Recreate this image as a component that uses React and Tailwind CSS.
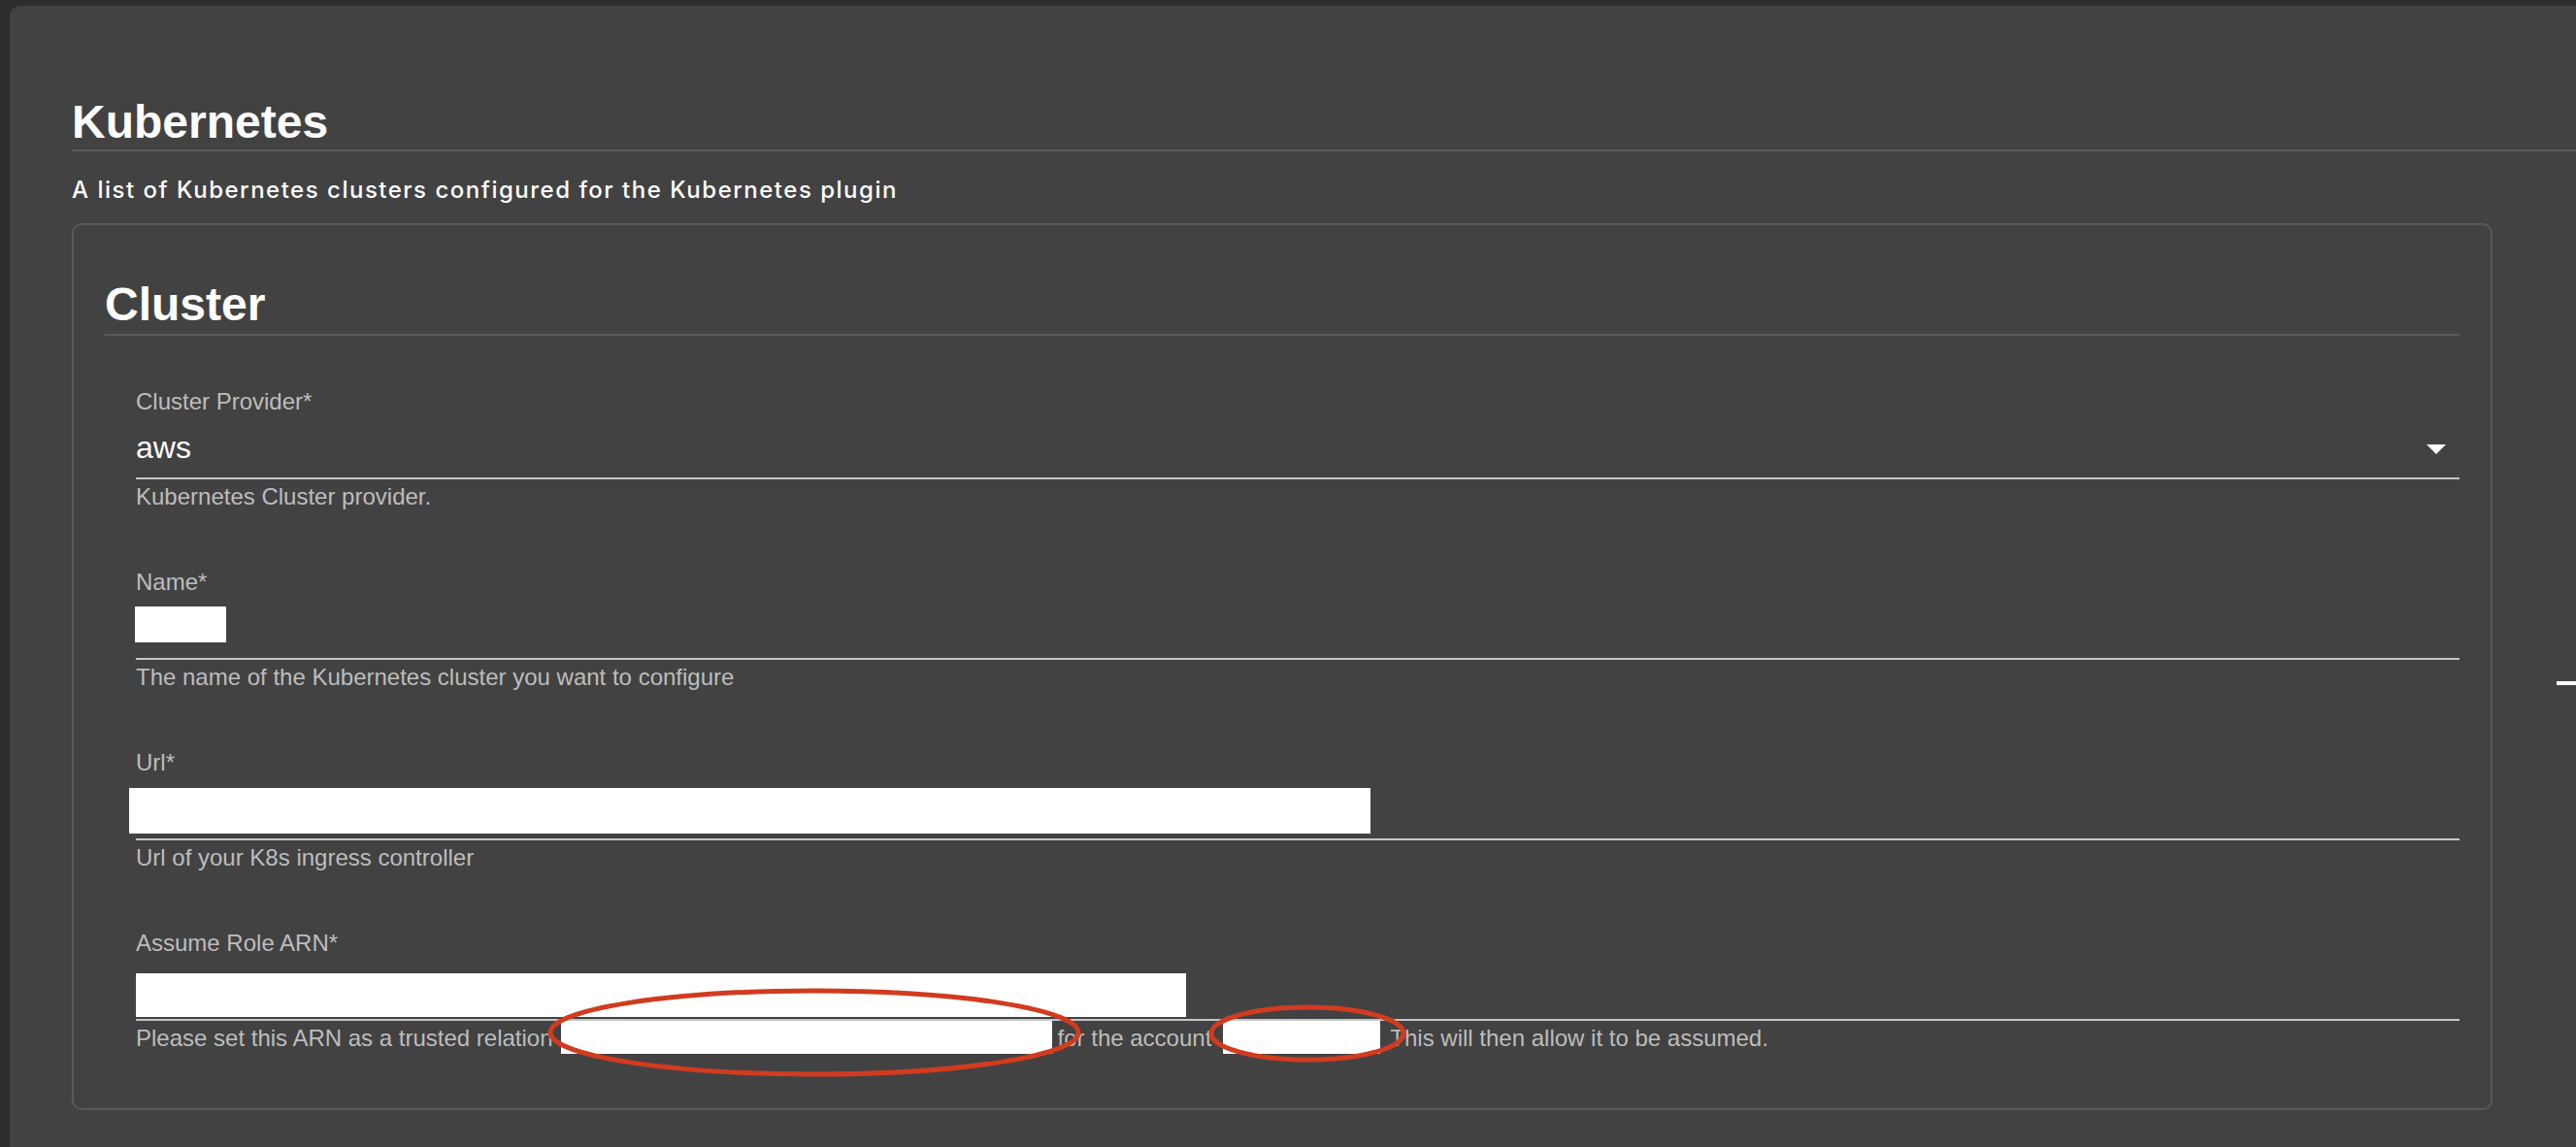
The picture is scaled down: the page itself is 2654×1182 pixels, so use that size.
export default function App() {
  return (
    <div className="min-h-screen bg-[#2d2d2d] pt-[6px] pl-[10px] font-['Liberation_Sans',Arial,sans-serif] overflow-hidden">
      <div className="min-h-[1176px] bg-[#424242] rounded-tl-[10px] pl-[64px] pt-[92px] overflow-hidden">

        {/* Page header */}
        <h1 className="text-[48px] leading-[56px] font-bold text-white border-b-2 border-[#5b5b5b]">
          Kubernetes
        </h1>
        <p className="mt-[24px] font-['Inter',sans-serif] font-medium text-[24px] leading-[32px] text-white tracking-[1.5px] whitespace-nowrap">
          A list of Kubernetes clusters configured for the Kubernetes plugin
        </p>

        <div className="mt-[18px] flex items-start">
          {/* Cluster card */}
          <div className="w-[2494px] shrink-0 border-2 border-[#595959] rounded-[10px] px-[32px] pt-[32px] pb-[56px]">
            <h2 className="mt-[22px] pb-[2px] text-[48px] leading-[56px] font-bold text-white border-b-2 border-[#5b5b5b]">
              Cluster
            </h2>

            <div className="pl-[32px] pt-[52px] flex flex-col gap-[56px]">
              {/* Provider select */}
              <div>
                <div className="text-[24px] leading-[32px] text-[#bdbdbd]">Cluster Provider*</div>
                <div className="h-[62px] flex items-start justify-between border-b-2 border-[#c6c6c6] box-content">
                  <span className="pt-[11px] text-[32px] leading-[40px] text-white">aws</span>
                  <svg className="mt-[28px] mr-[14px]" width="20" height="10" viewBox="0 0 20 10">
                    <path d="M0 0h20L10 10z" fill="#fff" />
                  </svg>
                </div>
                <div className="mt-[2px] text-[24px] leading-[32px] text-[#bdbdbd]">Kubernetes Cluster provider.</div>
              </div>

              {/* Name */}
              <div>
                <div className="text-[24px] leading-[32px] text-[#bdbdbd]">Name*</div>
                <div className="h-[62px] flex flex-col border-b-2 border-[#c6c6c6] box-content">
                  <div className="mt-[9px] -ml-[1px] w-[94px] h-[37px] bg-white" />
                </div>
                <div className="mt-[2px] text-[24px] leading-[32px] text-[#bdbdbd]">The name of the Kubernetes cluster you want to configure</div>
              </div>

              {/* Url */}
              <div>
                <div className="text-[24px] leading-[32px] text-[#bdbdbd]">Url*</div>
                <div className="h-[62px] flex flex-col border-b-2 border-[#c6c6c6] box-content">
                  <div className="mt-[10px] -ml-[7px] w-[1279px] h-[47px] bg-white" />
                </div>
                <div className="mt-[2px] text-[24px] leading-[32px] text-[#bdbdbd]">Url of your K8s ingress controller</div>
              </div>

              {/* Assume role */}
              <div>
                <div className="text-[24px] leading-[32px] text-[#bdbdbd]">Assume Role ARN*</div>
                <div className="h-[62px] flex flex-col border-b-2 border-[#c6c6c6] box-content">
                  <div className="mt-[15px] w-[1082px] h-[45px] bg-white" />
                </div>
                <div className="relative mt-[2px] flex items-start text-[24px] leading-[32px] text-[#bdbdbd] whitespace-nowrap">
                  <span>Please set this ARN as a trusted relation</span>
                  <span className="ml-[8px] -mt-[2px] w-[506px] h-[34px] bg-white" />
                  <span className="ml-[6px]">for the account</span>
                  <span className="ml-[12px] -mt-[2px] w-[162px] h-[34px] bg-white" />
                  <span className="ml-[10px]">This will then allow it to be assumed.</span>

                  {/* annotation marks */}
                  <svg className="absolute left-0 -top-[60px] pointer-events-none" width="1400" height="140" viewBox="0 0 1400 140">
                    <ellipse cx="699" cy="70" rx="272" ry="43" fill="none" stroke="#d13b1f" strokeWidth="5" />
                    <ellipse cx="1207" cy="71" rx="99" ry="27" fill="none" stroke="#d13b1f" strokeWidth="5" />
                  </svg>
                </div>
              </div>
            </div>
          </div>

          <div className="ml-[66px] mt-[472px] w-[20px] h-[4px] bg-white shrink-0" />
        </div>
      </div>
    </div>
  )
}
